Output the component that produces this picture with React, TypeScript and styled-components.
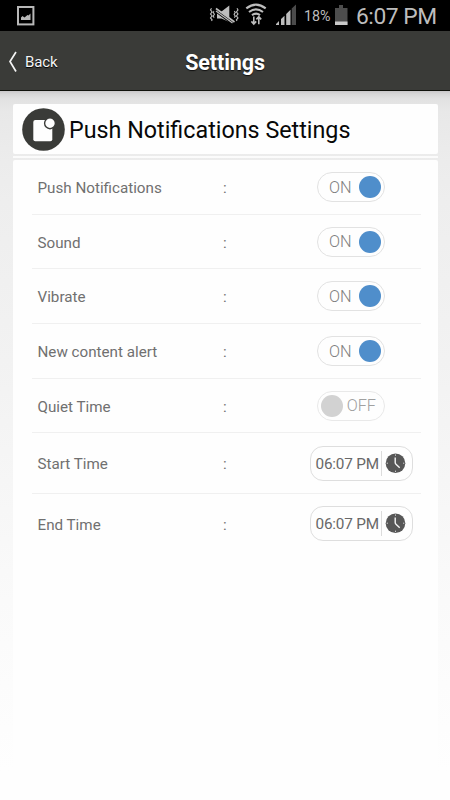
import React from 'react';
import styled, { createGlobalStyle } from 'styled-components';

const GlobalStyle = createGlobalStyle`
  * { box-sizing: border-box; }
  body { margin: 0; background: #fefefe; font-family: Roboto, "Noto Sans", sans-serif; }
`;

const Screen = styled.div`
  width: 450px;
  height: 800px;
  overflow: hidden;
  display: flex;
  flex-direction: column;
`;

const StatusBar = styled.div`
  height: 31px;
  flex: none;
  background: #000;
  color: #bdbdbd;
  display: flex;
  align-items: center;
  padding: 0 13px 0 17px;
`;

const StatusIcons = styled.svg`
  display: block;
  flex: none;
`;

const StatusGroup = styled.div`
  margin-left: auto;
  display: flex;
  align-items: center;
`;

const BatteryText = styled.span`
  font-size: 14.3px;
  line-height: 31px;
  width: 27px;
  margin: 1px 4px 0 7px;
  white-space: nowrap;
`;

const Clock = styled.span`
  font-size: 22.8px;
  letter-spacing: -0.45px;
  line-height: 31px;
  width: 81px;
  margin: 2px 0 0 8px;
  white-space: nowrap;
`;

const Header = styled.header`
  height: 60px;
  flex: none;
  background: #3a3b38;
  border-bottom: 1px solid #11120c;
  color: #fff;
  display: grid;
  grid-template-columns: 100px 1fr 100px;
  align-items: center;
`;

const BackButton = styled.button`
  border: 0;
  background: none;
  padding: 2px 0 0 8px;
  color: #f4f4f4;
  font: 400 15px/20px Roboto, sans-serif;
  letter-spacing: -0.1px;
  display: flex;
  align-items: center;
  gap: 8px;
  text-shadow: 0 1px 1px #000;
`;

const Title = styled.h1`
  margin: 5px 0 0;
  text-align: center;
  font-size: 21.5px;
  letter-spacing: -0.1px;
  line-height: 26px;
  font-weight: 700;
  text-shadow: 0 1px 1px #111;
`;

const Content = styled.main`
  flex: 1;
  padding: 13px 12.5px 0;
  display: flex;
  flex-direction: column;
  background: linear-gradient(#c9c7c9 0, #d7d7d7 3px, #e2e2e2 8px, #e8e8e8 20px, #ececec 70px, #eeeeee 110px, #f2f2f2 270px, #fafafa 510px, #fefefe 680px);
`;

const TitleCard = styled.div`
  height: 50px;
  flex: none;
  border-radius: 2px;
  background: #fefefe;
  display: flex;
  align-items: center;
  padding-left: 9px;
  gap: 4.5px;
`;

const CardTitle = styled.h2`
  margin: 2px 0 0;
  font-size: 23.3px;
  line-height: 30px;
  font-weight: 400;
  color: #080808;
  white-space: nowrap;
`;

const Strip = styled.div`
  height: 2px;
  flex: none;
  margin: 2px 0;
  background: #fbfbfb;
`;

const Panel = styled.section`
  flex: 1;
  background: #fefefe;
  padding: 0 17px 0 19.5px;
  border-radius: 2px 2px 0 0;
`;

const Row = styled.div<{ $height: number; $last?: boolean }>`
  height: ${p => p.$height}px;
  border-bottom: ${p => (p.$last ? 0 : 1)}px solid #f0f0f0;
  display: grid;
  grid-template-columns: 185.5px 87px 1fr;
  align-items: center;
  padding-left: 5.5px;
  color: #707070;
  font-size: 15.2px;
  line-height: 20px;
`;

const Label = styled.span`
  padding-top: 2px;
`;

const Switch = styled.button<{ $on: boolean }>`
  width: 68px;
  height: 30px;
  margin-left: 7px;
  border: 1px solid ${p => (p.$on ? '#e2e2e2' : '#e9e9e9')};
  border-radius: 15px;
  background: #fefefe;
  padding: 0 ${p => (p.$on ? '3px 0 11px' : '8px 0 3px')};
  display: flex;
  flex-direction: ${p => (p.$on ? 'row' : 'row-reverse')};
  align-items: center;
  justify-content: space-between;
  font: 300 16.3px/28px Roboto, sans-serif;
  color: ${p => (p.$on ? '#808080' : '#a0a0a0')};
`;

const SwitchText = styled.span`
  padding-top: 1px;
`;

const Knob = styled.span<{ $on: boolean }>`
  width: 22px;
  height: 22px;
  border-radius: 50%;
  background: ${p => (p.$on ? '#4f8ecb' : '#d2d2d2')};
`;

const TimeButton = styled.button`
  width: 102.5px;
  height: 35px;
  border: 1px solid #dedede;
  border-radius: 13px;
  background: #fefefe;
  display: flex;
  align-items: center;
  padding: 0 0 0 4.5px;
  font: 400 15.3px/33px Roboto, sans-serif;
  letter-spacing: -0.2px;
  color: #686868;
`;

const TimeText = styled.span`
  width: 65px;
  text-align: left;
  white-space: nowrap;
  padding-top: 2px;
`;

const Divider = styled.span`
  width: 1px;
  height: 25px;
  background: #dcdcdc;
  margin-right: 3px;
`;

const ClockIcon = () => (
  <svg width="21" height="21" viewBox="0 0 21 21">
    <circle cx="10.5" cy="10.2" r="9.8" fill="#575757" />
    <path d="M10.2 4.5V9.5Q10.2 10.6 11 11.3L14.7 14.8" fill="none" stroke="#f5f5f5" strokeWidth="1.4" />
    <path d="M10.5 1.5v1.2M10.5 17.7v1.2M1.7 10.2h1.2M18.1 10.2h1.2" stroke="#ddd" strokeWidth="1" />
  </svg>
);

const toggles = [
  { label: 'Push Notifications', on: true, height: 55 },
  { label: 'Sound', on: true, height: 54 },
  { label: 'Vibrate', on: true, height: 55 },
  { label: 'New content alert', on: true, height: 55 },
  { label: 'Quiet Time', on: false, height: 54 },
];

const times = [
  { label: 'Start Time', value: '06:07 PM', height: 61 },
  { label: 'End Time', value: '06:07 PM', height: 59 },
];

export default function App() {
  return (
    <Screen>
      <GlobalStyle />
      <StatusBar>
        <StatusIcons width="18" height="20" viewBox="0 0 18 20">
          <rect x="1" y="1" width="15.4" height="17.4" fill="none" stroke="#b8b8b8" strokeWidth="2" />
          <path d="M4 14V11.5l1.5-1.5 2 1.5 3-2.5 1 .5L13.5 7.5v6.5z" fill="#b8b8b8" />
        </StatusIcons>
        <StatusGroup>
          <StatusIcons width="88" height="31" viewBox="209 0 88 31" fill="none" stroke="#bdbdbd">
            <path d="M211.5 8.2l-1 1.7 1.6 2-1.6 2 1.6 2-1.6 2 1.6 2-.6 1M214.2 11l-1 1.4 1.2 1.8-1.2 2 1 1.4M234.3 11l1 1.4-1.2 1.8 1.2 2-1 1.4M237 8.2l1 1.7-1.6 2 1.6 2-1.6 2 1.6 2-1.6 2 .6 1" strokeWidth="1.1" />
            <path d="M217 11.5h4.5L229.3 5.5V22L221.5 18.5H217z" fill="#bdbdbd" stroke="none" />
            <path d="M215 10L233.5 23.6" stroke="#000" strokeWidth="3.4" />
            <path d="M216 8.5L234.5 22" strokeWidth="1.7" />
            <path d="M216 11L232.5 23" strokeWidth="1.2" />
            <path d="M246.3 8.4q9.7-7.6 19.4 0M249 12q7-5.4 14 0M252 15.2q4-3 8 0" strokeWidth="2.1" />
            <path d="M253.8 16.5v7.5M251.4 21.4l2.4 2.7 2.4-2.7M258.8 24.3v-7.5M256.4 19.4l2.4-2.7 2.4 2.7" strokeWidth="1.6" />
            <path d="M276 25v-1l3-3v4zM281 25v-6l3.5-3.2V25zM286.2 25V14l4.3-4.2V25z" fill="#bdbdbd" stroke="none" />
            <path d="M291.7 25V8.5l4.3-4V25z" fill="#4b4b4b" stroke="none" />
          </StatusIcons>
          <BatteryText>18%</BatteryText>
          <StatusIcons width="13" height="21" viewBox="0 0 13 21">
            <path d="M0 3h4V0h4v3h4.5v17H0z" fill="#4d4d4d" />
            <path d="M0 16.5h12.5V20H0z" fill="#c9c9c9" />
          </StatusIcons>
          <Clock>6:07 PM</Clock>
        </StatusGroup>
      </StatusBar>
      <Header>
        <BackButton>
          <svg width="9" height="22" viewBox="0 0 9 22" fill="none" stroke="#f4f4f4" strokeWidth="1.7">
            <path d="M8 1L2 10.5l6 10" />
          </svg>
          Back
        </BackButton>
        <Title>Settings</Title>
      </Header>
      <Content>
        <TitleCard>
          <svg width="43" height="43" viewBox="0 0 43 43">
            <circle cx="21.5" cy="21.5" r="21.3" fill="#3a3b38" />
            <rect x="11.3" y="12" width="19" height="21.2" rx="2" fill="#fefefe" />
            <circle cx="28" cy="15.3" r="5.4" fill="#fefefe" stroke="#3a3b38" strokeWidth="1.4" />
          </svg>
          <CardTitle>Push Notifications Settings</CardTitle>
        </TitleCard>
        <Strip />
        <Panel>
          {toggles.map(({ label, on, height }) => (
            <Row key={label} $height={height}>
              <Label>{label}</Label>
              <Label>:</Label>
              <Switch $on={on} role="switch" aria-checked={on}>
                <SwitchText>{on ? 'ON' : 'OFF'}</SwitchText>
                <Knob $on={on} />
              </Switch>
            </Row>
          ))}
          {times.map(({ label, value, height }, i) => (
            <Row key={label} $height={height} $last={i === times.length - 1}>
              <Label>{label}</Label>
              <Label>:</Label>
              <TimeButton>
                <TimeText>{value}</TimeText>
                <Divider />
                <ClockIcon />
              </TimeButton>
            </Row>
          ))}
        </Panel>
      </Content>
    </Screen>
  );
}
